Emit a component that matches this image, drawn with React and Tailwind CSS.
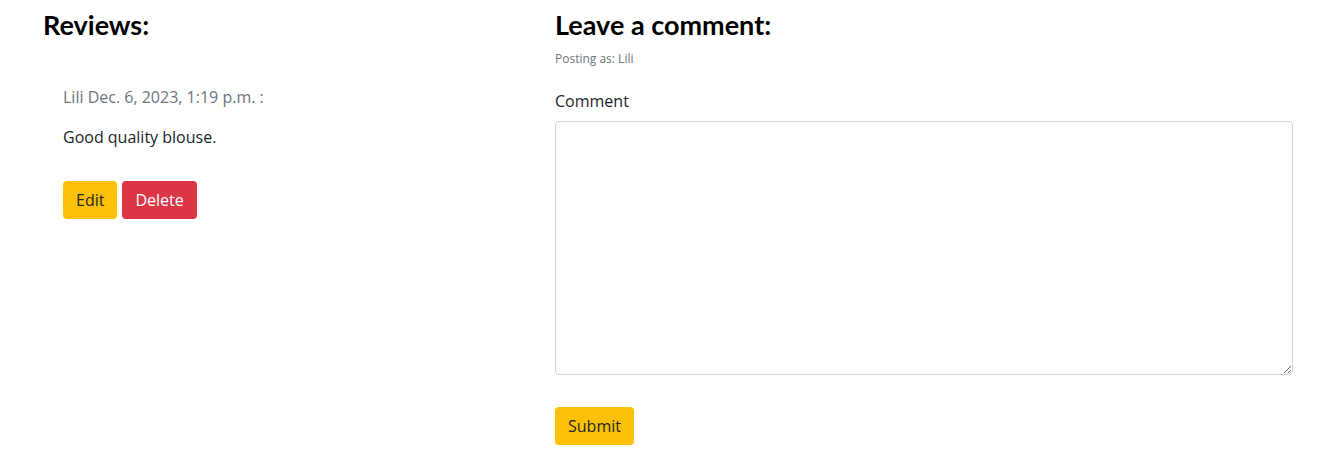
const headingFont = { fontFamily: 'Lato, "Noto Sans", sans-serif' };

const ReviewItem = ({ author, date, body }) => (
  <div className="px-5 pt-[21px]">
    <p className="text-[#6c757d] leading-6">{author} {date} :</p>
    <p className="mt-4 text-[#212529] leading-6">{body}</p>
    <div className="mt-[32px] flex gap-[5px]">
      <button className="h-[38px] px-[13px] bg-[#ffc107] text-[#212529] rounded-[4px]">Edit</button>
      <button className="h-[38px] px-[13px] bg-[#dc3545] text-white rounded-[4px]">Delete</button>
    </div>
  </div>
);

export default function App() {
  return (
    <div
      className="w-[1331px] h-[458px] bg-white text-[#212529] text-base flex pl-[43px] pr-[38px]"
      style={{ fontFamily: '"Open Sans", sans-serif' }}
    >
      <div className="w-[512px] shrink-0">
        <h3 className="text-[27px] font-bold leading-[1.2] text-black mt-[9px]" style={headingFont}>
          Reviews:
        </h3>
        <div className="mt-[23px]">
          <ReviewItem author="Lili" date="Dec. 6, 2023, 1:19 p.m." body="Good quality blouse." />
        </div>
      </div>

      <div className="flex-1">
        <h3 className="text-[27px] font-bold leading-[1.2] text-black mt-[9px]" style={headingFont}>
          Leave a comment:
        </h3>
        <p className="text-xs text-[#6c757d] mt-[10px] leading-4">Posting as: Lili</p>
        <form className="mt-[22px]" onSubmit={(e) => e.preventDefault()}>
          <label className="block leading-6 mb-2">Comment</label>
          <textarea className="block w-full h-[254px] border border-[#ced4da] rounded-[4px] px-3 py-1.5 outline-none" />
          <button type="submit" className="mt-8 h-[38px] px-[13px] bg-[#ffc107] text-[#212529] rounded-[4px]">
            Submit
          </button>
        </form>
      </div>
    </div>
  );
}
